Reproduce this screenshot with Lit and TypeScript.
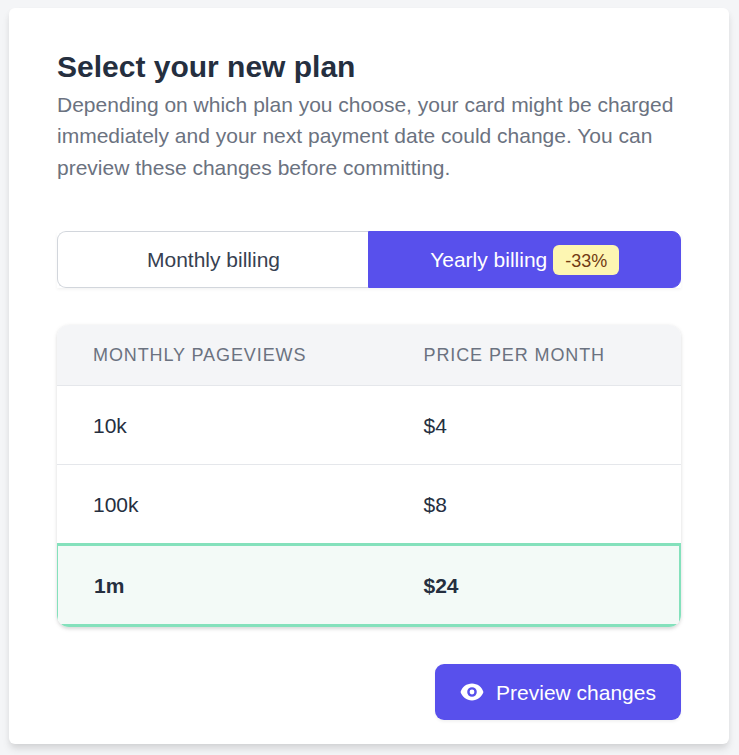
import { LitElement, html, css } from "lit";
import { customElement, state } from "lit/decorators.js";
import { classMap } from "lit/directives/class-map.js";

interface Plan {
  views: string;
  price: string;
}

const PLANS: Plan[] = [
  { views: "10k", price: "$4" },
  { views: "100k", price: "$8" },
  { views: "1m", price: "$24" },
];

@customElement("app-root")
export class AppRoot extends LitElement {
  @state() private selected = 2;
  @state() private yearly = true;

  static styles = css`
    :host {
      display: block;
      box-sizing: border-box;
      height: 755px;
      overflow: hidden;
      padding: 8px 10px 11px 9px;
      background: #f4f5f7;
      font: 21px/31.5px "Liberation Sans", Arial, sans-serif;
      color: #252f3f;
    }
    * {
      box-sizing: border-box;
    }
    .card {
      height: 736px;
      padding: 41px 48px 24px;
      background: #fff;
      border-radius: 6px;
      box-shadow: 0 6px 9px -1.5px rgba(0, 0, 0, 0.1), 0 3px 6px -1.5px rgba(0, 0, 0, 0.06);
    }
    h1 {
      margin: 0;
      font-size: 30px;
      line-height: 36px;
      font-weight: 700;
    }
    p {
      margin: 3.75px 0 0;
      color: #6b7280;
    }
    .toggle {
      display: flex;
      height: 57px;
      margin-top: 47.75px;
      box-shadow: 0 1.5px 3px rgba(0, 0, 0, 0.05);
    }
    button {
      font: inherit;
      margin: 0;
      padding: 0;
      border: 0;
      display: flex;
      align-items: center;
      justify-content: center;
    }
    .option {
      width: 313px;
      color: #374151;
      background: #fff;
      border: 1px solid #d2d6dc;
    }
    .option:first-child {
      width: 311px;
      padding-left: 1px;
      border-right: 0;
      border-radius: 9px 0 0 9px;
    }
    .option:last-child {
      padding-left: 0.5px;
      border-radius: 0 9px 9px 0;
    }
    .option.active {
      color: #fff;
      background: #5850ec;
      border-color: #5850ec;
    }
    .badge {
      height: 30px;
      margin-left: 6px;
      padding: 0 12px;
      border-radius: 6px;
      background: #fdf6b2;
      color: #723b13;
      font-size: 18px;
      line-height: 32px;
    }
    .table {
      margin-top: 36.5px;
      border-radius: 12px;
      overflow: hidden;
      box-shadow: 0 1.5px 4.5px rgba(0, 0, 0, 0.1), 0 1.5px 3px rgba(0, 0, 0, 0.06);
    }
    .row {
      display: grid;
      grid-template-columns: 330.5px 1fr;
      align-items: center;
      height: 79px;
      padding: 2px 0 0 36px;
      border-bottom: 1px solid #e5e7eb;
    }
    .row.plain-end {
      height: 78px;
      padding-top: 3px;
      border-bottom: 0;
    }
    .head {
      height: 61px;
      background: #f4f5f7;
      color: #6b7280;
      font-size: 18px;
      letter-spacing: 0.9px;
    }
    .row.chosen {
      height: 84px;
      grid-template-columns: 329.5px 1fr;
      border: 3px solid #84e1bc;
      border-left-width: 1px;
      border-right-width: 2px;
      background: #f3faf7;
      font-weight: 700;
    }
    .footer {
      display: flex;
      justify-content: flex-end;
      margin-top: 37px;
    }
    .preview {
      width: 246px;
      height: 56px;
      gap: 12px;
      color: #fff;
      background: #5850ec;
      border-radius: 9px;
      box-shadow: 0 1.5px 3px rgba(0, 0, 0, 0.05);
    }
    .preview span {
      padding-top: 2px;
    }
    .eye {
      width: 24px;
      height: 24px;
      fill: currentColor;
    }
  `;

  private renderPlan(plan: Plan, i: number) {
    const classes = {
      row: true,
      chosen: i === this.selected,
      "plain-end": i === this.selected - 1,
    };
    return html`<div class=${classMap(classes)} @click=${() => (this.selected = i)}>
      <span>${plan.views}</span><span>${plan.price}</span>
    </div>`;
  }

  render() {
    return html`
      <main class="card">
        <h1>Select your new plan</h1>
        <p>
          Depending on which plan you choose, your card might be charged immediately and your next
          payment date could change. You can preview these changes before committing.
        </p>
        <div class="toggle">
          <button
            class=${classMap({ option: true, active: !this.yearly })}
            @click=${() => (this.yearly = false)}
          >
            Monthly billing
          </button>
          <button
            class=${classMap({ option: true, active: this.yearly })}
            @click=${() => (this.yearly = true)}
          >
            Yearly billing<span class="badge">-33%</span>
          </button>
        </div>
        <section class="table">
          <div class="row head"><span>MONTHLY PAGEVIEWS</span><span>PRICE PER MONTH</span></div>
          ${PLANS.map((plan, i) => this.renderPlan(plan, i))}
        </section>
        <div class="footer">
          <button class="preview">
            <svg class="eye" viewBox="0 0 20 20" aria-hidden="true">
              <path d="M10 12a2 2 0 100-4 2 2 0 000 4z" />
              <path
                fill-rule="evenodd"
                d="M.458 10C1.732 5.943 5.522 3 10 3s8.268 2.943 9.542 7c-1.274 4.057-5.064 7-9.542 7S1.732 14.057.458 10zM14 10a4 4 0 11-8 0 4 4 0 018 0z"
              />
            </svg>
            <span>Preview changes</span>
          </button>
        </div>
      </main>
    `;
  }
}
